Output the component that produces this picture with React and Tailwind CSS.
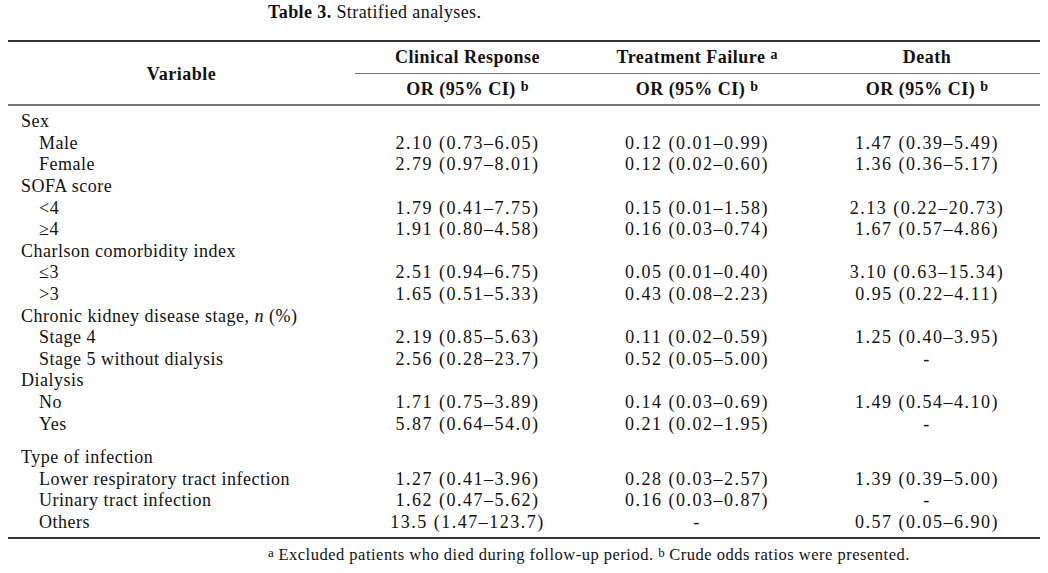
const rows = [
  { label: 'Sex', group: true },
  { label: 'Male', cr: '2.10 (0.73–6.05)', tf: '0.12 (0.01–0.99)', d: '1.47 (0.39–5.49)' },
  { label: 'Female', cr: '2.79 (0.97–8.01)', tf: '0.12 (0.02–0.60)', d: '1.36 (0.36–5.17)' },
  { label: 'SOFA score', group: true },
  { label: '<4', cr: '1.79 (0.41–7.75)', tf: '0.15 (0.01–1.58)', d: '2.13 (0.22–20.73)' },
  { label: '≥4', cr: '1.91 (0.80–4.58)', tf: '0.16 (0.03–0.74)', d: '1.67 (0.57–4.86)' },
  { label: 'Charlson comorbidity index', group: true },
  { label: '≤3', cr: '2.51 (0.94–6.75)', tf: '0.05 (0.01–0.40)', d: '3.10 (0.63–15.34)' },
  { label: '>3', cr: '1.65 (0.51–5.33)', tf: '0.43 (0.08–2.23)', d: '0.95 (0.22–4.11)' },
  { label: 'Chronic kidney disease stage, ', italic: 'n', rest: ' (%)', group: true },
  { label: 'Stage 4', cr: '2.19 (0.85–5.63)', tf: '0.11 (0.02–0.59)', d: '1.25 (0.40–3.95)' },
  { label: 'Stage 5 without dialysis', cr: '2.56 (0.28–23.7)', tf: '0.52 (0.05–5.00)', d: '-' },
  { label: 'Dialysis', group: true },
  { label: 'No', cr: '1.71 (0.75–3.89)', tf: '0.14 (0.03–0.69)', d: '1.49 (0.54–4.10)' },
  { label: 'Yes', cr: '5.87 (0.64–54.0)', tf: '0.21 (0.02–1.95)', d: '-' },
  { spacer: true },
  { label: 'Type of infection', group: true },
  { label: 'Lower respiratory tract infection', cr: '1.27 (0.41–3.96)', tf: '0.28 (0.03–2.57)', d: '1.39 (0.39–5.00)' },
  { label: 'Urinary tract infection', cr: '1.62 (0.47–5.62)', tf: '0.16 (0.03–0.87)', d: '-' },
  { label: 'Others', cr: '13.5 (1.47–123.7)', tf: '-', d: '0.57 (0.05–6.90)' },
];

const Sup = ({ children }) => (
  <sup className="text-[14px] font-bold relative -top-[4px] tracking-normal">{children}</sup>
);

export default function App() {
  return (
    <div className="w-[1048px] h-[573px] bg-white text-[#111] overflow-hidden" style={{ fontFamily: '"Liberation Serif", serif' }}>
      {/* caption */}
      <div className="pl-[268px] pt-[1px] text-[18px] leading-[22px] tracking-[0.4px]">
        <span className="font-bold">Table 3.</span> Stratified analyses.
      </div>

      <table className="ml-2 mt-[17px] w-[1032px] border-collapse table-fixed text-[18px] tracking-[0.5px]">
        <colgroup>
          <col className="w-[347px]" />
          <col className="w-[225px]" />
          <col className="w-[234px]" />
          <col className="w-[226px]" />
        </colgroup>
        <thead>
          <tr className="border-t-2 border-[#333]">
            <th rowSpan={2} className="font-bold text-center align-middle border-b-[2px] border-[#777] leading-[22px] pt-[2px]">
              Variable
            </th>
            <th className="font-bold text-center h-[32px] border-b border-[#777] leading-[22px]">Clinical Response</th>
            <th className="font-bold text-center h-[32px] border-b border-[#777] leading-[22px]">
              Treatment Failure <Sup>a</Sup>
            </th>
            <th className="font-bold text-center h-[32px] border-b border-[#777] leading-[22px]">Death</th>
          </tr>
          <tr className="border-b-[2px] border-[#777]">
            {[0, 1, 2].map((i) => (
              <th key={i} className="font-bold text-center h-[32px] leading-[22px] pt-[1px]">
                OR (95% CI) <Sup>b</Sup>
              </th>
            ))}
          </tr>
        </thead>
        <tbody>
          <tr><td colSpan={4} className="h-[6px] p-0"></td></tr>
          {rows.map((r, i) =>
            r.spacer ? (
              <tr key={i}><td colSpan={4} className="h-[12px] p-0"></td></tr>
            ) : (
              <tr key={i} className="h-[21.6px]">
                <td className={`${r.group ? 'pl-[13px]' : 'pl-[31px]'} py-0 leading-[21px] whitespace-nowrap`}>
                  {r.label}
                  {r.italic && <i>{r.italic}</i>}
                  {r.rest}
                </td>
                <td className="text-center py-0 leading-[21px] tracking-[1.5px] whitespace-nowrap">{r.cr}</td>
                <td className="text-center py-0 leading-[21px] tracking-[1.5px] whitespace-nowrap">{r.tf}</td>
                <td className="text-center py-0 leading-[21px] tracking-[1.5px] whitespace-nowrap">{r.d}</td>
              </tr>
            )
          )}
          <tr className="border-b-2 border-[#333]"><td colSpan={4} className="h-[5px] p-0"></td></tr>
        </tbody>
      </table>

      <div className="pl-[268px] pt-[6px] text-[16.5px] leading-[20px] tracking-[0.5px]">
        <sup className="text-[13px] relative -top-[3px] tracking-normal">a</sup> Excluded patients who died during follow-up period.{' '}
        <sup className="text-[13px] relative -top-[3px] tracking-normal">b</sup> Crude odds ratios were presented.
      </div>
    </div>
  );
}
